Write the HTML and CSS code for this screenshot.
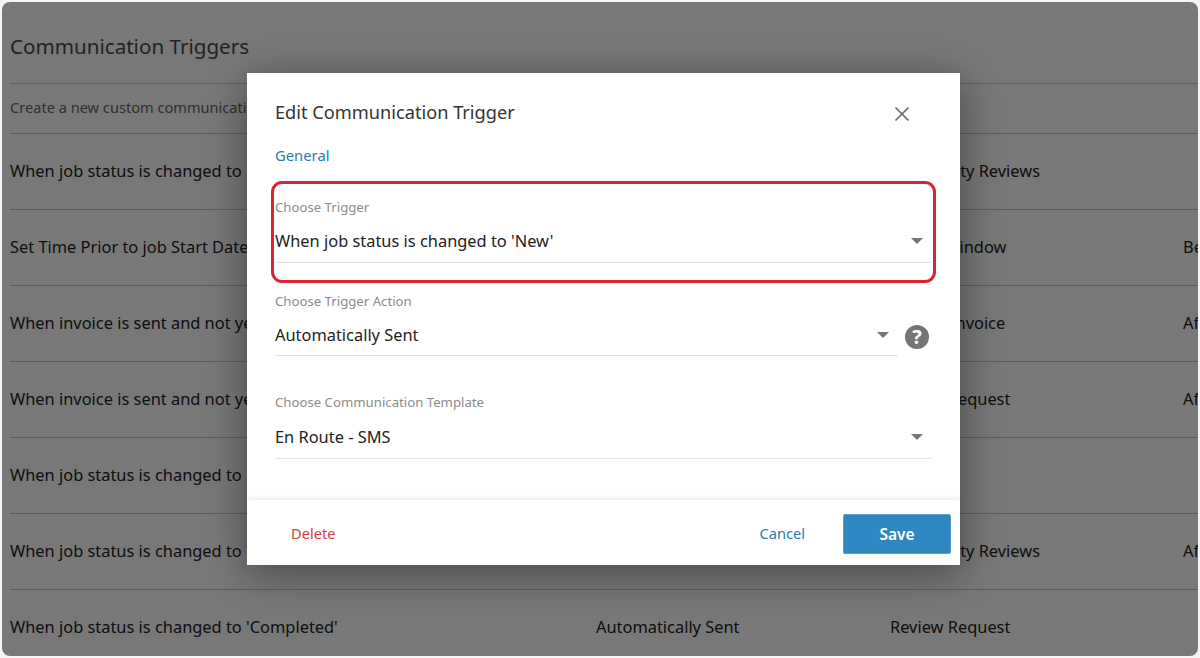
FILE: index.html
```html
<!DOCTYPE html>
<html lang="en">
<head>
<meta charset="utf-8">
<title>Communication Triggers</title>
<link rel="stylesheet" href="styles.css">
</head>
<body>
<div class="frame">
  <div class="page">
    <h1 class="page-title">Communication Triggers</h1>
    <div class="intro">Create a new custom communication trigger</div>
    <div class="row"><span>When job status is changed to 'Completed'</span><span>Automatically Sent</span><span>Third Party Reviews</span><span></span></div>
    <div class="row"><span>Set Time Prior to job Start Date</span><span>Automatically Sent</span><span>Arrival Window</span><span>Before</span></div>
    <div class="row"><span>When invoice is sent and not yet paid</span><span>Automatically Sent</span><span>Unpaid Invoice</span><span>After</span></div>
    <div class="row"><span>When invoice is sent and not yet paid</span><span>Automatically Sent</span><span>Review Request</span><span>After</span></div>
    <div class="row"><span>When job status is changed to 'En Route'</span><span>Automatically Sent</span><span>En Route</span><span></span></div>
    <div class="row"><span>When job status is changed to 'Completed'</span><span>Automatically Sent</span><span>Third Party Reviews</span><span>After</span></div>
    <div class="row last"><span>When job status is changed to 'Completed'</span><span>Automatically Sent</span><span>Review Request</span><span></span></div>
  </div>
  <div class="scrim"></div>
  <div class="modal">
    <div class="modal-head">
      <h2 class="modal-title">Edit Communication Trigger</h2>
      <svg class="close" width="16" height="16" viewBox="0 0 16 16"><path d="M1.5 1.5l13 13M14.5 1.5l-13 13" fill="none" stroke="#666" stroke-width="1.6"/></svg>
    </div>
    <a class="tab">General</a>
    <div class="modal-body">
      <div class="field first">
        <label class="field-label">Choose Trigger</label>
        <div class="select"><span>When job status is changed to 'New'</span><i class="caret"></i></div>
      </div>
      <div class="field-row">
        <div class="field second">
          <label class="field-label">Choose Trigger Action</label>
          <div class="select"><span>Automatically Sent</span><i class="caret"></i></div>
        </div>
        <svg class="help" width="24" height="24" viewBox="0 0 24 24"><circle cx="12" cy="12" r="12" fill="#757575"/><text x="12" y="19" text-anchor="middle" class="help-mark">?</text></svg>
      </div>
      <div class="field third">
        <label class="field-label">Choose Communication Template</label>
        <div class="select"><span>En Route - SMS</span><i class="caret"></i></div>
      </div>
    </div>
    <div class="modal-foot">
      <a class="delete">Delete</a>
      <a class="cancel">Cancel</a>
      <button class="save" type="button">Save</button>
    </div>
    <div class="highlight"></div>
  </div>
</div>
</body>
</html>
```
FILE: styles.css
```css
* { box-sizing: border-box; }
html, body { margin: 0; height: 100%; }
body {
  background: #f4f5f7;
  padding: 2px;
  font-family: "Noto Sans", "Liberation Sans", sans-serif;
  overflow: hidden;
}
.frame {
  position: relative;
  width: 1196px;
  height: 654px;
  border-radius: 8px;
  overflow: hidden;
  background: #fff;
}
.page { padding-left: 8px; color: #222; }
.page-title {
  margin: 0;
  height: 82px;
  padding-top: 29px;
  font-size: 20.6px;
  line-height: 30px;
  font-weight: 400;
  color: #484a4c;
  border-bottom: 1px solid #c8c8c8;
}
.intro {
  height: 50px;
  border-bottom: 1px solid #c8c8c8;
  font-size: 14.6px;
  line-height: 46px;
  color: #666;
}
.row {
  display: grid;
  grid-template-columns: 586px 294px 293px 100px;
  height: 76px;
  padding-bottom: 2px;
  align-items: center;
  border-bottom: 1px solid #c8c8c8;
  font-size: 16.4px;
  white-space: nowrap;
}
.row.last { border-bottom: 0; padding-bottom: 4px; }
.scrim {
  position: absolute;
  inset: 0;
  background: rgba(0, 0, 0, 0.53);
}
.modal {
  position: absolute;
  left: 245px;
  top: 71px;
  width: 713px;
  height: 492px;
  background: #fff;
  box-shadow: 0 8px 40px rgba(0, 0, 0, 0.4);
  display: flex;
  flex-direction: column;
  padding-top: 26px;
}
.modal-head {
  display: flex;
  justify-content: space-between;
  align-items: center;
  padding: 0 50px 0 28px;
  height: 27px;
}
.modal-title {
  margin: 0;
  font-size: 18.2px;
  line-height: 27px;
  font-weight: 400;
  color: #333;
}
.close { margin-top: 3px; }
.tab {
  margin: 18px 0 0 28px;
  font-size: 14.8px;
  line-height: 22px;
  color: #2a7ab5;
}
.modal-body { flex: 1; padding: 0 28px; }
.field-label {
  display: block;
  font-size: 13.2px;
  line-height: 18px;
  color: #8c8c8c;
}
.select {
  display: flex;
  align-items: center;
  justify-content: space-between;
  height: 47px;
  padding: 2px 9px 0 0;
  font-size: 16.4px;
  color: #222;
  border-bottom: 1px solid #e2e2e2;
}
.caret {
  width: 0;
  height: 0;
  margin-top: 1px;
  border-left: 6px solid transparent;
  border-right: 6px solid transparent;
  border-top: 6px solid #777;
}
.field.first { margin-top: 32px; }
.field-row { display: flex; align-items: flex-end; margin-top: 29px; gap: 7px; }
.field.second { flex: 1; }
.second .select { height: 46px; padding-top: 3px; }
.help { margin-bottom: 7px; margin-right: 3px; }
.help-mark { font-family: "Noto Sans", sans-serif; font-size: 20px; font-weight: 700; fill: #fff; }
.field.third { margin-top: 37px; }
.third .select { height: 48px; padding-top: 3px; }
.modal-foot {
  height: 65px;
  display: flex;
  align-items: center;
  padding: 1px 9px 0 44px;
  box-shadow: 0 -2px 5px rgba(0, 0, 0, 0.08);
  font-size: 14.6px;
  background: #fff;
}
.delete { color: #d9383f; margin-right: auto; }
.cancel { color: #2a7ab5; margin-right: 38px; }
.save {
  width: 108px;
  height: 40px;
  margin-top: 2px;
  border: 1px solid #5a9fd0;
  border-radius: 2px;
  background: #2f87c1;
  color: #fff;
  font: 600 15.5px "Noto Sans", sans-serif;
}
.highlight {
  position: absolute;
  left: 24px;
  top: 108px;
  width: 665px;
  height: 102px;
  border: 3px solid #d92232;
  border-radius: 11px;
  pointer-events: none;
}
```
